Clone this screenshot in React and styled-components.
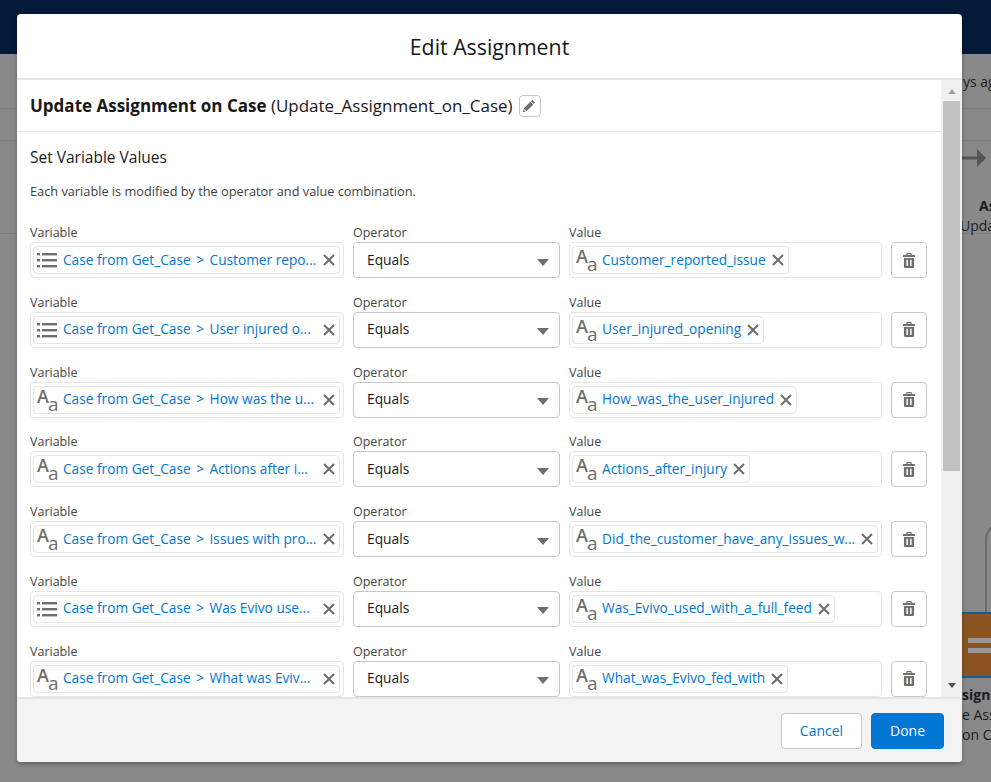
import React from 'react';
import styled, { createGlobalStyle } from 'styled-components';

const GlobalStyle = createGlobalStyle`
  html, body {
    margin: 0;
    height: 100%;
    overflow: hidden;
    background: #898989;
    font-family: 'Open Sans', 'Noto Sans', sans-serif;
  }
`;

const rows = [
  { icon: 'list', field: 'Customer repo...', value: 'Customer_reported_issue' },
  { icon: 'list', field: 'User injured o...', value: 'User_injured_opening' },
  { icon: 'text', field: 'How was the u...', value: 'How_was_the_user_injured' },
  { icon: 'text', field: 'Actions after i...', value: 'Actions_after_injury' },
  { icon: 'text', field: 'Issues with pro...', value: 'Did_the_customer_have_any_issues_w...', wide: true },
  { icon: 'list', field: 'Was Evivo use...', value: 'Was_Evivo_used_with_a_full_feed' },
  { icon: 'text', field: 'What was Eviv...', value: 'What_was_Evivo_fed_with' },
];

const Page = styled.div`
  position: relative;
  width: 991px;
  height: 782px;
  overflow: hidden;
  background: #898989;
`;

const TopBar = styled.div`
  height: 54px;
  background: #031a38;
`;

/* dimmed flow canvas behind the modal */
const BackLine = styled.div`
  position: absolute;
  left: 0;
  right: 0;
  top: ${(p) => p.$top}px;
  height: 1px;
  background: #7d7d7d;
`;

const BackText = styled.span`
  position: absolute;
  left: ${(p) => p.$left}px;
  top: ${(p) => p.$top}px;
  font-size: 14px;
  line-height: 18px;
  font-weight: ${(p) => (p.$bold ? 700 : 400)};
  color: #1c1c1c;
  white-space: nowrap;
`;

const BackArrow = styled.svg`
  position: absolute;
  left: 962px;
  top: 149px;
`;

const BackCurve = styled.svg`
  position: absolute;
  left: 962px;
  top: 515px;
`;

const BackNode = styled.div`
  position: absolute;
  left: 962px;
  right: 0;
  top: 612px;
  height: 66px;
  display: flex;
  flex-direction: column;
  justify-content: center;
  gap: 5px;
  padding-left: 6px;
  background: #8a5523;
  border-top: 2px solid #1d5a8c;
  border-bottom: 2px solid #1d5a8c;
  box-sizing: border-box;
`;

const NodeBar = styled.i`
  display: block;
  height: 5px;
  background: #969696;
`;

const Modal = styled.div`
  position: absolute;
  left: 17px;
  top: 14px;
  width: 945px;
  height: 748px;
  display: flex;
  flex-direction: column;
  overflow: hidden;
  background: #fff;
  border-radius: 4px;
  box-shadow: 0 2px 4px rgba(0, 0, 0, 0.3);
  color: #181818;
`;

const ModalHeader = styled.header`
  flex: 0 0 66px;
  box-sizing: border-box;
  display: flex;
  align-items: center;
  justify-content: center;
  border-bottom: 2px solid #e5e5e5;
  font-size: 21.3px;
  font-weight: 400;
`;

const ModalMiddle = styled.div`
  flex: 1;
  min-height: 0;
  display: flex;
`;

const Content = styled.div`
  flex: 1;
  min-width: 0;
  overflow: hidden;
`;

const TitleRow = styled.div`
  height: 52px;
  display: flex;
  align-items: center;
  padding: 0 13px;
  border-bottom: 1px solid #e5e5e5;
  box-sizing: border-box;
  font-size: 17px;
  white-space: pre;
`;

const TitleName = styled.b`
  font-weight: 700;
`;

const EditButton = styled.button`
  width: 22px;
  height: 22px;
  margin-left: 6px;
  padding: 0;
  display: flex;
  align-items: center;
  justify-content: center;
  background: #fff;
  border: 1px solid #c9c7c5;
  border-radius: 4px;
`;

const Section = styled.div`
  padding: 14px 15px 0 13px;
`;

const SectionTitle = styled.h2`
  margin: 0;
  font-size: 15.5px;
  line-height: 22px;
  font-weight: 400;
`;

const Help = styled.p`
  margin: 14px 0 22px;
  font-size: 12.75px;
  line-height: 18px;
  color: #3e3e3c;
`;

const Row = styled.div`
  height: 69.75px;
  display: grid;
  grid-template-columns: 314px 207px 313px 36px;
  column-gap: 9px;
  align-items: start;
`;

const Field = styled.div`
  display: flex;
  flex-direction: column;
  min-width: 0;
`;

const Label = styled.label`
  height: 20px;
  font-size: 12.5px;
  line-height: 22px;
  color: #444;
`;

const PillBox = styled.div`
  height: 36px;
  padding: 0 3px 0 2px;
  box-sizing: border-box;
  display: flex;
  align-items: center;
  background: #fff;
  border: 1px solid #e5e5e5;
  border-radius: 4px;
`;

const Pill = styled.div`
  flex: ${(p) => (p.$fill ? '1' : '0 1 auto')};
  min-width: 0;
  height: 28px;
  padding: 0 4px 0 3px;
  box-sizing: border-box;
  display: flex;
  align-items: center;
  background: #fff;
  border: 1px solid #e5e5e5;
  border-radius: 4px;
`;

const PillText = styled.span`
  flex: 1;
  min-width: 0;
  margin: 0 6px 2px 6px;
  overflow: hidden;
  white-space: nowrap;
  font-size: 13.7px;
  color: #0176d3;
`;

const Chevron = styled.span`
  margin: 0 2px;
`;

const TextIconBox = styled.span`
  flex: 0 0 20px;
  height: 24px;
  position: relative;
  color: #706e6b;
`;

const TextIconBig = styled.span`
  position: absolute;
  left: 0;
  top: -3px;
  font-size: 18px;
  line-height: 22px;
  font-weight: 600;
`;

const TextIconSmall = styled.span`
  position: absolute;
  left: 11px;
  top: 6px;
  font-size: 19px;
  line-height: 20px;
  font-weight: 500;
`;

const Select = styled.div`
  height: 36px;
  padding: 0 10px 2px 13px;
  box-sizing: border-box;
  display: flex;
  align-items: center;
  justify-content: space-between;
  background: #fff;
  border: 1px solid #c9c7c5;
  border-radius: 4px;
  font-size: 13.8px;
`;

const SelectArrow = styled.i`
  width: 0;
  height: 0;
  margin-top: 6px;
  border-left: 6.5px solid transparent;
  border-right: 6.5px solid transparent;
  border-top: 7px solid #706e6b;
`;

const DeleteButton = styled.button`
  width: 36px;
  height: 36px;
  margin-top: 20px;
  padding: 0;
  display: flex;
  align-items: center;
  justify-content: center;
  background: #fff;
  border: 1px solid #c9c7c5;
  border-radius: 4px;
`;

const Scrollbar = styled.div`
  flex: 0 0 21px;
  display: flex;
  flex-direction: column;
  align-items: center;
  background: #f1f1f1;
`;

const ScrollArrow = styled.i`
  flex: 0 0 auto;
  width: 0;
  height: 0;
  border-left: 4.5px solid transparent;
  border-right: 4.5px solid transparent;
  border-${(p) => (p.$up ? 'bottom' : 'top')}: 5px solid ${(p) => (p.$up ? '#a3a3a3' : '#505050')};
  margin-top: ${(p) => (p.$up ? '9px' : '0')};
`;

const ScrollThumb = styled.div`
  flex: 0 0 370px;
  width: 17px;
  margin: 7px 0 212px;
  background: #c1c1c1;
`;

const ModalFooter = styled.footer`
  flex: 0 0 65px;
  box-sizing: border-box;
  display: flex;
  align-items: center;
  justify-content: flex-end;
  gap: 9px;
  padding: 0 18px 0 0;
  background: #f3f3f3;
  border-top: 2px solid #e5e5e5;
`;

const FooterButton = styled.button`
  height: 36px;
  width: ${(p) => (p.$primary ? '73px' : '81px')};
  padding: 0;
  font-family: inherit;
  font-size: 14px;
  border-radius: 4px;
  color: ${(p) => (p.$primary ? '#fff' : '#0176d3')};
  background: ${(p) => (p.$primary ? '#0176d3' : '#fff')};
  border: 1px solid ${(p) => (p.$primary ? '#0176d3' : '#c9c7c5')};
`;

const ListIcon = () => (
  <svg width="20" height="16" viewBox="0 0 20 16" fill="#706e6b" style={{ flex: 'none' }}>
    <rect x="0" y="1" width="3" height="2.4" />
    <rect x="5" y="1" width="15" height="2.4" />
    <rect x="0" y="7" width="3" height="2.4" />
    <rect x="5" y="7" width="15" height="2.4" />
    <rect x="0" y="13" width="3" height="2.4" />
    <rect x="5" y="13" width="15" height="2.4" />
  </svg>
);

const TextIcon = () => (
  <TextIconBox>
    <TextIconBig>A</TextIconBig>
    <TextIconSmall>a</TextIconSmall>
  </TextIconBox>
);

const CloseIcon = () => (
  <svg width="12" height="12" viewBox="0 0 12 12" stroke="#706e6b" strokeWidth="2" style={{ flex: 'none' }}>
    <path d="M1 1l10 10M11 1L1 11" />
  </svg>
);

const TrashIcon = () => (
  <svg width="12" height="15" viewBox="0 0 13 15" fill="#706e6b" preserveAspectRatio="none">
    <path d="M4.500 0h4a1 1 0 0 1 1 1v1h3a.5.5 0 0 1 .5.500V4H0V2.500A.5.5 0 0 1 .5 2h3V1a1 1 0 0 1 1-1zm.2 1.200V2h3.600v-.8z" />
    <path fillRule="evenodd" d="M1 5h11v8.700A1.300 1.300 0 0 1 10.700 15H2.300A1.300 1.300 0 0 1 1 13.700zM3.700 6.800v6.200h1.600V6.800zm4 0v6.200h1.600V6.800z" />
  </svg>
);

const PencilIcon = () => (
  <svg width="13" height="13" viewBox="0 0 12 12" fill="#706e6b">
    <path d="M8.500.8l2.700 2.700-1.200 1.200-2.700-2.700zM6.700 2.600l2.700 2.700L3.300 11.400.6 8.700zM.3 9.500l2.200 2.200-2.500.3z" />
  </svg>
);

const AssignmentRow = ({ row }) => (
  <Row>
    <Field>
      <Label>Variable</Label>
      <PillBox>
        <Pill $fill>
          {row.icon === 'list' ? <ListIcon /> : <TextIcon />}
          <PillText>
            Case from Get_Case <Chevron>&gt;</Chevron> {row.field}
          </PillText>
          <CloseIcon />
        </Pill>
      </PillBox>
    </Field>
    <Field>
      <Label>Operator</Label>
      <Select>
        Equals
        <SelectArrow />
      </Select>
    </Field>
    <Field>
      <Label>Value</Label>
      <PillBox>
        <Pill $fill={row.wide}>
          <TextIcon />
          <PillText>{row.value}</PillText>
          <CloseIcon />
        </Pill>
      </PillBox>
    </Field>
    <DeleteButton>
      <TrashIcon />
    </DeleteButton>
  </Row>
);

const App = () => (
  <Page>
    <GlobalStyle />
    <TopBar />
    <BackLine $top={108} />
    <BackLine $top={140} />
    <BackLine $top={233} />
    <BackText $left={963} $top={73}>ys ago</BackText>
    <BackArrow width="29" height="18" viewBox="0 0 29 18" fill="#555">
      <path d="M0 7.500h15V0l9 9-9 9v-7.500H0z" />
    </BackArrow>
    <BackText $left={979} $top={197} $bold>As</BackText>
    <BackText $left={960} $top={217}>Upda</BackText>
    <BackCurve width="29" height="100" viewBox="0 0 29 100" fill="none" stroke="#6a6a6a" strokeWidth="2">
      <path d="M24 97V25q0-10 8-14" />
    </BackCurve>
    <BackNode>
      <NodeBar />
      <NodeBar />
    </BackNode>
    <BackText $left={962} $top={686} $bold>sign</BackText>
    <BackText $left={962} $top={706}>e Ass</BackText>
    <BackText $left={962} $top={726}>on C</BackText>

    <Modal>
      <ModalHeader>Edit Assignment</ModalHeader>
      <ModalMiddle>
        <Content>
          <TitleRow>
            <TitleName>Update Assignment on Case</TitleName> (Update_Assignment_on_Case)
            <EditButton>
              <PencilIcon />
            </EditButton>
          </TitleRow>
          <Section>
            <SectionTitle>Set Variable Values</SectionTitle>
            <Help>Each variable is modified by the operator and value combination.</Help>
            {rows.map((row) => (
              <AssignmentRow key={row.field} row={row} />
            ))}
          </Section>
        </Content>
        <Scrollbar>
          <ScrollArrow $up />
          <ScrollThumb />
          <ScrollArrow />
        </Scrollbar>
      </ModalMiddle>
      <ModalFooter>
        <FooterButton>Cancel</FooterButton>
        <FooterButton $primary>Done</FooterButton>
      </ModalFooter>
    </Modal>
  </Page>
);

export default App;
